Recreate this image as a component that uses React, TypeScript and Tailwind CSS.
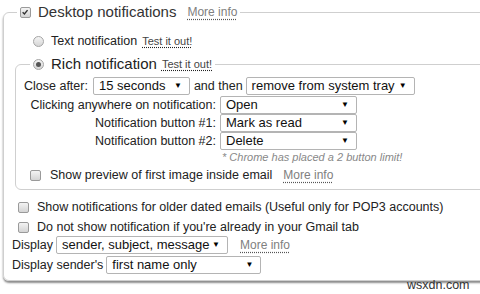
import React from "react";

function Check({ checked = false }: { checked?: boolean }) {
  return (
    <span className="relative inline-block h-[11px] w-[11px] shrink-0 rounded-[2px] border border-[#9a9a9a] bg-gradient-to-b from-[#f4f4f4] to-[#d4d4d4]">
      {checked && (
        <svg viewBox="0 0 11 11" className="absolute left-0 top-0 h-[9px] w-[9px]">
          <path d="M2 5.2 L4.2 7.4 L8 2.6" fill="none" stroke="#333" strokeWidth="1.7" />
        </svg>
      )}
    </span>
  );
}

function Radio({ checked = false }: { checked?: boolean }) {
  return (
    <span className="flex h-[11px] w-[11px] shrink-0 items-center justify-center rounded-full border border-[#a5a5a5] bg-gradient-to-b from-[#f4f4f4] to-[#d6d6d6]">
      {checked && <span className="h-[5px] w-[5px] rounded-full bg-[#555]" />}
    </span>
  );
}

function Select({ value, className }: { value: string; className: string }) {
  return (
    <div
      className={`flex h-[18px] items-center justify-between rounded-[2px] border border-[#b4b4b4] bg-white pl-[5px] pr-[7px] text-[13px] leading-[16px] text-[#111] ${className}`}
    >
      <span className="whitespace-nowrap">{value}</span>
      <span className="text-[8px] text-black">▼</span>
    </div>
  );
}

function MoreInfo({ className = "" }: { className?: string }) {
  return (
    <span className={`text-[12px] text-[#808080] underline decoration-dotted decoration-[#555] underline-offset-[3px] ${className}`}>
      More info
    </span>
  );
}

function TestIt() {
  return (
    <span className="ml-[5px] text-[11px] text-[#444] underline decoration-dotted decoration-[#222] underline-offset-[2px]">
      Test it out!
    </span>
  );
}

export default function App() {
  return (
    <div className="relative h-[294px] w-[480px] overflow-hidden bg-white font-['Liberation_Sans',Arial,sans-serif] text-[12.5px] leading-[16px] text-[#222]">
      <fieldset className="ml-[3px] mt-[2px] w-[520px] rounded-[6px] border border-[#cfcfcf] pb-[6px] shadow-[0_2px_2px_rgba(0,0,0,0.45)]">
        <legend className="ml-[13px] px-[3px]">
          <span className="flex h-[20px] items-center">
            <Check checked />
            <span className="ml-[7px] text-[15px] leading-[20px] text-[#333]">Desktop notifications</span>
            <MoreInfo className="ml-[11px]" />
          </span>
        </legend>

        <div className="ml-[29px] mt-[11px] flex h-[16px] items-center">
          <Radio />
          <span className="ml-[7px] whitespace-nowrap">Text notification</span>
          <TestIt />
        </div>

        <fieldset className="ml-[11px] mt-[5px] rounded-[6px] border border-[#cfcfcf] pb-[6px]">
          <legend className="ml-[14px] px-[3px]">
            <span className="flex h-[20px] items-center">
              <Radio checked />
              <span className="ml-[7px] text-[15px] leading-[20px] text-[#222]">Rich notification</span>
              <TestIt />
            </span>
          </legend>

          <div className="ml-[8px] mt-[3px] flex h-[18px] items-center whitespace-nowrap">
            <span>Close after:</span>
            <Select value="15 seconds" className="ml-[5px] w-[97px]" />
            <span className="ml-[4px]">and then</span>
            <Select value="remove from system tray" className="ml-[3px] w-[169px]" />
          </div>

          <div className="ml-[4px] mt-[1px] grid grid-cols-[196px_137px] grid-rows-[18px_18px_18px_14px] gap-x-[4px] whitespace-nowrap">
            <span className="text-right leading-[18px]">Clicking anywhere on notification:</span>
            <Select value="Open" />
            <span className="text-right leading-[18px]">Notification button #1:</span>
            <Select value="Mark as read" />
            <span className="text-right leading-[18px]">Notification button #2:</span>
            <Select value="Delete" />
            <span />
            <span className="pl-[2px] text-[11px] italic leading-[14px] text-[#888]">* Chrome has placed a 2 button limit!</span>
          </div>

          <div className="ml-[14px] mt-[3px] flex h-[16px] items-center whitespace-nowrap">
            <Check />
            <span className="ml-[9px]">Show preview of first image inside email</span>
            <MoreInfo className="ml-[11px]" />
          </div>
        </fieldset>

        <div className="ml-[14px] mt-[9px] flex h-[16px] items-center whitespace-nowrap">
          <Check />
          <span className="ml-[8px]">Show notifications for older dated emails (Useful only for POP3 accounts)</span>
        </div>
        <div className="ml-[14px] mt-[4px] flex h-[16px] items-center whitespace-nowrap">
          <Check />
          <span className="ml-[8px]">Do not show notification if you're already in your Gmail tab</span>
        </div>
        <div className="ml-[8px] mt-[1px] flex h-[18px] items-center whitespace-nowrap">
          <span>Display</span>
          <Select value="sender, subject, message" className="ml-[3px] w-[172px]" />
          <MoreInfo className="ml-[12px]" />
        </div>
        <div className="ml-[8px] mt-[2px] flex h-[18px] items-center whitespace-nowrap">
          <span>Display sender's</span>
          <Select value="first name only" className="ml-[3px] w-[155px]" />
        </div>
      </fieldset>

      <span className="absolute left-[407px] top-[277px] text-[12.5px] text-[#333]">wsxdn.com</span>
    </div>
  );
}
